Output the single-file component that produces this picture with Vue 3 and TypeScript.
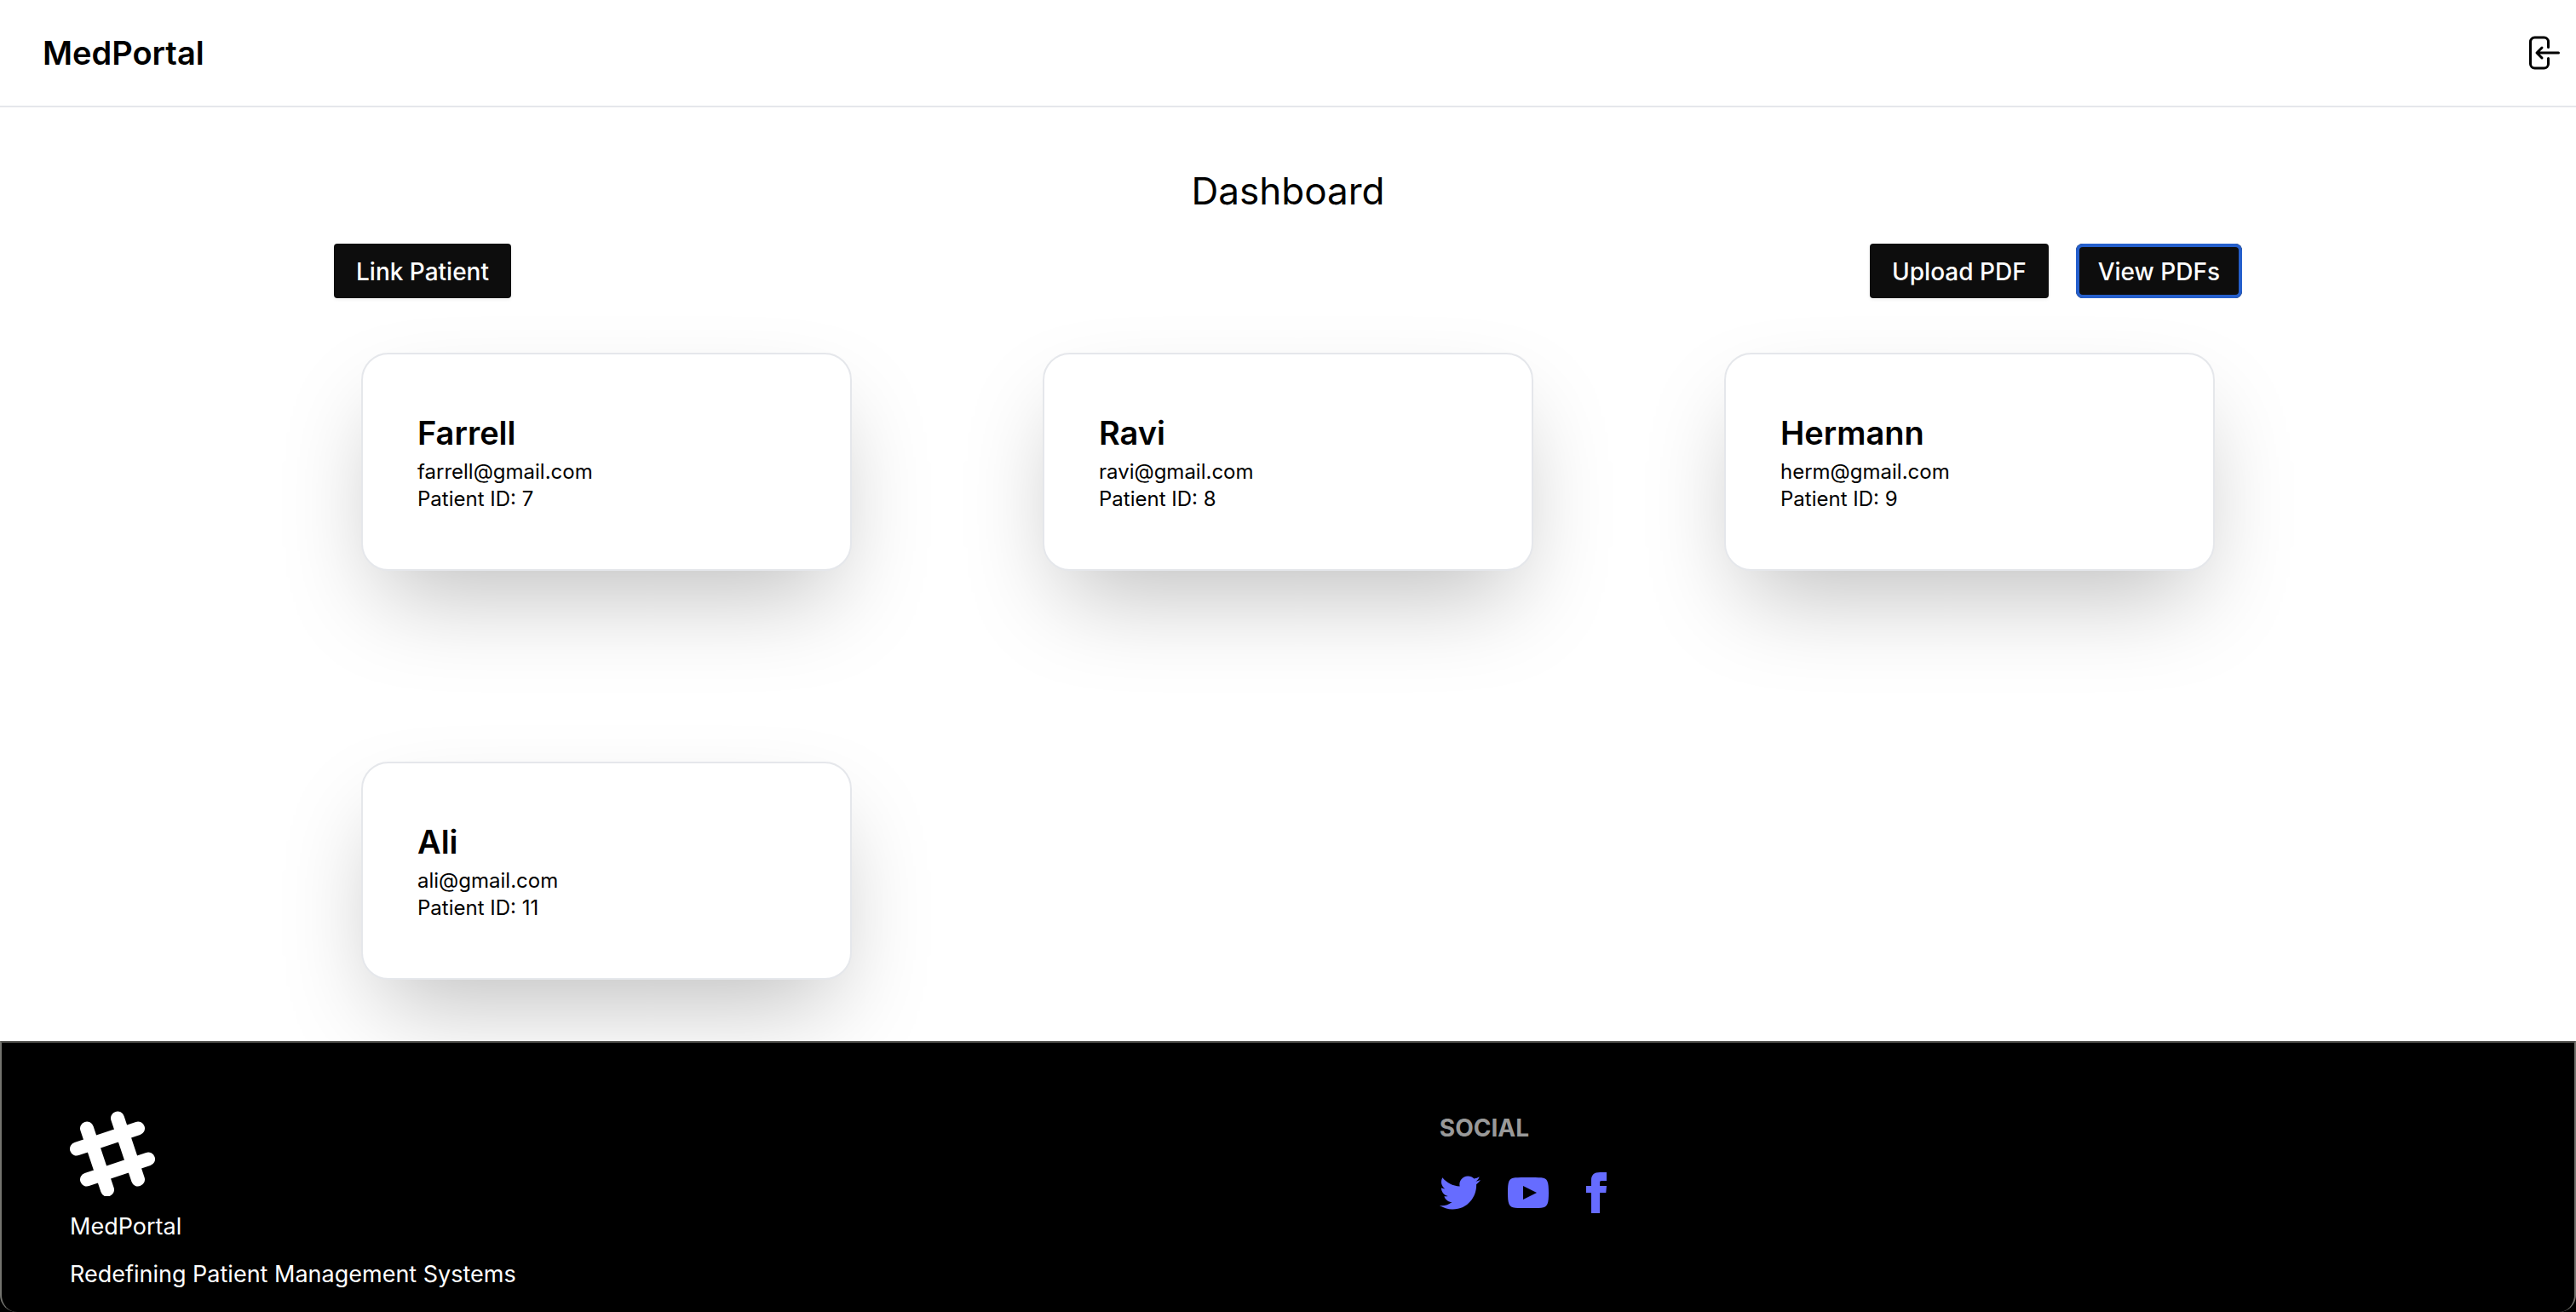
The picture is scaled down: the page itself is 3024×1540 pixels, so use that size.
<script setup lang="ts">
interface Patient {
  id: number
  name: string
  email: string
}

const patients: Patient[] = [
  { id: 7, name: 'Farrell', email: 'farrell@gmail.com' },
  { id: 8, name: 'Ravi', email: 'ravi@gmail.com' },
  { id: 9, name: 'Hermann', email: 'herm@gmail.com' },
  { id: 11, name: 'Ali', email: 'ali@gmail.com' },
]
</script>

<template>
  <div class="page">
    <header class="navbar">
      <a class="brand" href="#">MedPortal</a>
      <button class="logout" type="button" aria-label="Log out">
        <svg viewBox="0 0 40 40" width="40" height="40" fill="none" stroke="currentColor" stroke-width="3" stroke-linecap="round" stroke-linejoin="round">
          <path d="M25.500 13.500V7a5 5 0 0 0-5-5H9.500a5 5 0 0 0-5 5v26a5 5 0 0 0 5 5h11a5 5 0 0 0 5-5V26.500" />
          <path d="M37.500 20H12.500M18 14L12 20l6 6" />
        </svg>
      </button>
    </header>

    <main class="content">
      <h1 class="title">Dashboard</h1>
      <div class="toolbar">
        <button class="btn" type="button">Link Patient</button>
        <div class="group">
          <button class="btn" type="button">Upload PDF</button>
          <button class="btn focused" type="button">View PDFs</button>
        </div>
      </div>
      <div class="grid">
        <article v-for="p in patients" :key="p.id" class="card">
          <h2 class="name">{{ p.name }}</h2>
          <p class="detail">{{ p.email }}</p>
          <p class="detail">Patient ID: {{ p.id }}</p>
        </article>
      </div>
    </main>

    <footer class="footer">
      <div class="about">
        <svg class="logo" viewBox="0 0 100 100" width="100" height="100" fill="none" stroke="#fff" stroke-width="16" stroke-linecap="round">
          <path d="M8 44.500L80 20.500M20 80.500L92 56.500M20 20.500L44 92.500M56 8.500L80 80.500" />
        </svg>
        <p>MedPortal</p>
        <p>Redefining Patient Management Systems</p>
      </div>
      <div class="social">
        <h3 class="social-title">SOCIAL</h3>
        <div class="links">
          <a href="#" aria-label="Twitter">
            <svg viewBox="0 0 24 24" width="48" height="48" fill="currentColor"><path d="M24 4.557c-.883.392-1.832.656-2.828.775 1.017-.609 1.798-1.574 2.165-2.724-.951.564-2.005.974-3.127 1.195-.897-.957-2.178-1.555-3.594-1.555-3.179 0-5.515 2.966-4.797 6.045-4.091-.205-7.719-2.165-10.148-5.144-1.290 2.213-.669 5.108 1.523 6.574-.806-.026-1.566-.247-2.229-.616-.054 2.281 1.581 4.415 3.949 4.890-.693.188-1.452.232-2.224.084.626 1.956 2.444 3.379 4.600 3.419-2.070 1.623-4.678 2.348-7.290 2.040 2.179 1.397 4.768 2.212 7.548 2.212 9.142 0 14.307-7.721 13.995-14.646.962-.695 1.797-1.562 2.457-2.549z" /></svg>
          </a>
          <a href="#" aria-label="YouTube">
            <svg viewBox="0 0 24 24" width="48" height="48" fill="currentColor"><path d="M19.615 3.184c-3.604-.246-11.631-.245-15.230 0-3.897.266-4.356 2.620-4.385 8.816.029 6.185.484 8.549 4.385 8.816 3.600.245 11.626.246 15.230 0 3.897-.266 4.356-2.620 4.385-8.816-.029-6.185-.484-8.549-4.385-8.816zm-10.615 12.816v-8l8 3.993-8 4.007z" /></svg>
          </a>
          <a href="#" aria-label="Facebook">
            <svg viewBox="0 0 24 24" width="48" height="48" fill="currentColor"><path d="M9 8h-3v4h3v12h5v-12h3.642l.358-4h-4v-1.667c0-.955.192-1.333 1.115-1.333h2.885v-5h-3.808c-3.596 0-5.192 1.583-5.192 4.615v3.385z" /></svg>
          </a>
        </div>
      </div>
    </footer>
  </div>
</template>

<style>
body {
  background: #000;
}
</style>

<style scoped>
.page {
  color: #000;
  font-family: Inter, "Liberation Sans", sans-serif;
  font-size: 28px;
  line-height: 40px;
}
.navbar {
  display: flex;
  align-items: center;
  justify-content: space-between;
  height: 124px;
  padding: 0 18px 0 50px;
  border-bottom: 2px solid #e5e7eb;
  background: #fff;
}
.brand {
  color: inherit;
  font-size: 38px;
  font-weight: 600;
  text-decoration: none;
}
.logout {
  display: flex;
  padding: 0;
  border: 0;
  background: none;
  color: inherit;
}
h1, h2, h3, p {
  margin: 0;
}
.content {
  padding: 66px 392px 40px;
  background: #fff;
}
.title {
  font-size: 44px;
  font-weight: 400;
  line-height: 64px;
  text-align: center;
}
.toolbar {
  display: flex;
  justify-content: space-between;
  margin: 30px 0 32px;
}
.group {
  display: flex;
  gap: 32px;
}
.btn {
  height: 64px;
  padding: 2px 26px 0;
  border: 0;
  border-radius: 4px;
  background: #0d0d0d;
  box-shadow: 0 2px 4px rgba(0, 0, 0, 0.05);
  color: #fff;
  font: inherit;
  font-weight: 500;
}
.focused {
  border-radius: 8px;
  box-shadow: inset 0 0 0 4px #255fcc;
}
.grid {
  display: grid;
  grid-template-columns: repeat(3, 1fr);
  gap: 160px;
}
.card {
  box-sizing: border-box;
  height: 256px;
  margin: 32px;
  padding: 66px 64px;
  border: 2px solid #e5e7eb;
  border-radius: 32px;
  background: #fff;
  box-shadow: 0 50px 112px -24px rgba(0, 0, 0, 0.26);
}
.name {
  margin-bottom: 4px;
  font-size: 38px;
  font-weight: 600;
  line-height: 52px;
}
.detail {
  font-size: 24px;
  line-height: 32px;
}
.footer {
  position: relative;
  display: grid;
  grid-template-columns: auto auto;
  align-items: start;
  gap: 40px;
  padding: 80px 80px 24px;
  border: 2px solid #74746f;
  border-top-color: #50504c;
  border-bottom: 0;
  border-radius: 0 0 20px 20px;
  background: #000;
  color: #fff;
  font-size: 27px;
}
.about {
  display: grid;
  gap: 16px;
}
.social-title {
  color: #999;
  font-size: 28px;
  font-weight: 700;
}
.links {
  display: flex;
  gap: 32px;
  margin-top: 32px;
  color: #666cff;
}
.links a {
  display: flex;
  color: inherit;
}
</style>
